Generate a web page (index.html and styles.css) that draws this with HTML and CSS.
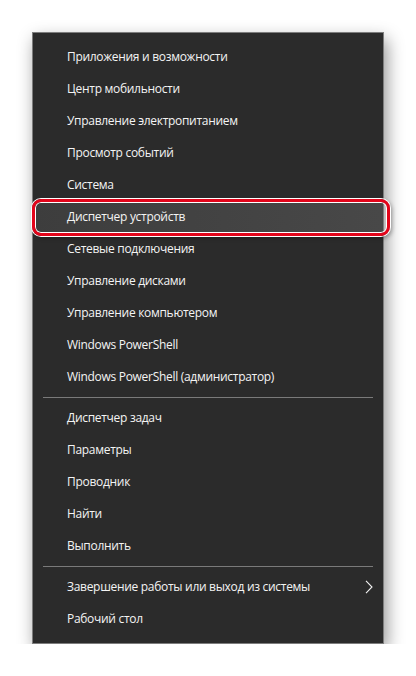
FILE: index.html
```html
<!DOCTYPE html>
<html lang="ru">
<head>
<meta charset="utf-8">
<title>Меню</title>
<link rel="stylesheet" href="styles.css">
</head>
<body>
<div class="menu">
  <div class="item">Приложения и возможности</div>
  <div class="item">Центр мобильности</div>
  <div class="item">Управление электропитанием</div>
  <div class="item">Просмотр событий</div>
  <div class="item">Система</div>
  <div class="item item-active">Диспетчер устройств<span class="callout"></span></div>
  <div class="item">Сетевые подключения</div>
  <div class="item">Управление дисками</div>
  <div class="item">Управление компьютером</div>
  <div class="item">Windows PowerShell</div>
  <div class="item">Windows PowerShell (администратор)</div>
  <div class="sep"></div>
  <div class="item">Диспетчер задач</div>
  <div class="item">Параметры</div>
  <div class="item">Проводник</div>
  <div class="item">Найти</div>
  <div class="item">Выполнить</div>
  <div class="sep"></div>
  <div class="item item-sub">Завершение работы или выход из системы
    <svg class="chev" width="8" height="14" viewBox="0 0 8 14"><path d="M1 0.8 L7 7 L1 13.2" fill="none" stroke="#f2f2f2" stroke-width="1.1"/></svg>
  </div>
  <div class="item">Рабочий стол</div>
</div>
</body>
</html>
```
FILE: styles.css
```css
html, body {
  margin: 0;
  padding: 0;
  background: #ffffff;
}
body {
  padding: 32px 0 0 32px;
  font-family: "Open Sans", "Noto Sans", sans-serif;
}
.menu {
  width: 350px;
  background: #2b2b2b;
  border: 1px solid #7d7d7d;
  padding: 8px 0;
  box-shadow: 3px 7px 16px rgba(0, 0, 0, 0.42);
}
.item {
  position: relative;
  height: 32px;
  line-height: 32px;
  padding-left: 34px;
  font-size: 12px;
  letter-spacing: -0.3px;
  color: #f4f4f4;
  white-space: nowrap;
}
.item-active {
  background: linear-gradient(90deg, #3d3d3d, #484848);
}
.callout {
  position: absolute;
  left: -1px;
  top: -2px;
  width: 352px;
  height: 31px;
  border: 3px solid #e3051b;
  border-radius: 9px;
  box-shadow: 0 0 0 1px #ffffff, inset 0 0 0 1px #ffffff, 2px 2px 4px rgba(0,0,0,0.35);
}
.item-sub .chev {
  position: absolute;
  right: 10px;
  top: 9px;
}
.sep {
  height: 1px;
  margin: 4px 10px;
  background: #7a7a7a;
}
```
